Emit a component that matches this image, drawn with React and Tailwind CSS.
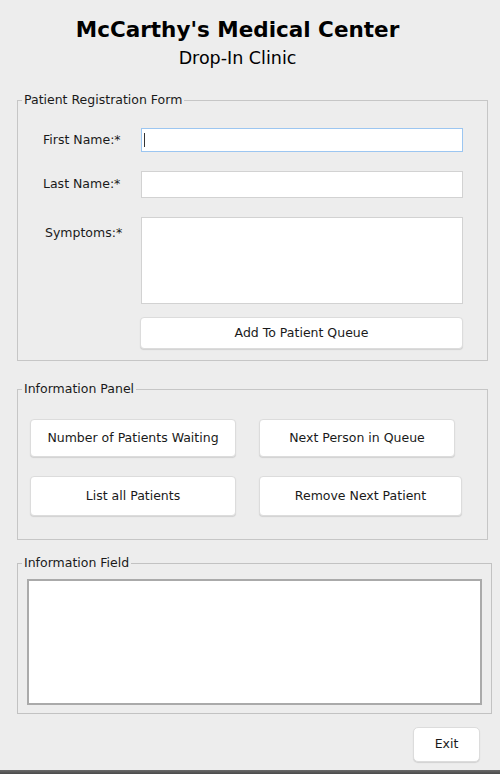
export default function App() {
  return (
    <div className="w-[500px] h-[774px] bg-[#ececec] flex flex-col font-['DejaVu_Sans',sans-serif] text-[#1a1a1a] overflow-hidden">
      <div className="flex flex-col flex-1 bg-[#ededed]">
        <div className="flex flex-col items-center pr-[25px] pt-[17px]">
          <div className="text-[21.5px] leading-[26px] font-bold text-black">McCarthy's Medical Center</div>
          <div className="text-[17.5px] leading-[22px] text-black mt-[4px]">Drop-In Clinic</div>
        </div>

        <fieldset className="mt-[23px] ml-[17px] w-[471px] border border-[#c6c6c6] px-[12px] pb-[11px]">
          <legend className="-ml-[8px] px-[2px] text-[12.5px] leading-[16px]">Patient Registration Form</legend>
          <div className="grid grid-cols-[111px_322px] gap-y-[19px] pt-[20px]">
            <div className="pl-[13px] flex items-center text-[12.5px]">First Name:*</div>
            <div className="h-[24px] bg-white border border-[#9cc6f1] flex items-center pl-[2px]">
              <div className="w-[1px] h-[14px] bg-[#333]" />
            </div>
            <div className="pl-[13px] flex items-center text-[12.5px]">Last Name:*</div>
            <div className="h-[27px] bg-white border border-[#d2d2d2]" />
            <div className="pl-[15px] pt-[7px] text-[12.5px]">Symptoms:*</div>
            <div className="h-[87px] bg-white border border-[#d2d2d2]" />
          </div>
          <div className="flex pl-[110px] mt-[13px]">
            <button className="w-[323px] h-[32px] bg-white rounded-[4px] border border-[#dcdcdc] shadow-[0_1px_1px_rgba(0,0,0,0.12)] text-[12.5px]">Add To Patient Queue</button>
          </div>
        </fieldset>

        <fieldset className="mt-[20px] ml-[17px] w-[471px] border border-[#c6c6c6] pl-[12px] pt-[22px] pb-[23px]">
          <legend className="-ml-[8px] px-[2px] text-[12.5px] leading-[16px]">Information Panel</legend>
          <div className="flex flex-col gap-[19px]">
            <div className="flex gap-[23px]">
              <button className="w-[206px] h-[38px] bg-white rounded-[4px] border border-[#dcdcdc] shadow-[0_1px_1px_rgba(0,0,0,0.12)] text-[12.5px]">Number of Patients Waiting</button>
              <button className="w-[196px] h-[38px] bg-white rounded-[4px] border border-[#dcdcdc] shadow-[0_1px_1px_rgba(0,0,0,0.12)] text-[12.5px]">Next Person in Queue</button>
            </div>
            <div className="flex gap-[23px]">
              <button className="w-[206px] h-[40px] bg-white rounded-[4px] border border-[#dcdcdc] shadow-[0_1px_1px_rgba(0,0,0,0.12)] text-[12.5px]">List all Patients</button>
              <button className="w-[203px] h-[40px] bg-white rounded-[4px] border border-[#dcdcdc] shadow-[0_1px_1px_rgba(0,0,0,0.12)] text-[12.5px]">Remove Next Patient</button>
            </div>
          </div>
        </fieldset>

        <fieldset className="mt-[15px] ml-[17px] w-[473px] border border-[#c2c2c2] px-[9px] pt-[8px] pb-[8px]">
          <legend className="-ml-[5px] px-[2px] text-[12.5px] leading-[16px]">Information Field</legend>
          <div className="h-[126px] w-[455px] bg-white border-2 border-[#aaaaaa]" />
        </fieldset>

        <div className="flex justify-end pr-[20px] mt-[13px]">
          <button className="w-[67px] h-[35px] bg-white rounded-[5px] border border-[#dcdcdc] shadow-[0_1px_1px_rgba(0,0,0,0.12)] text-[12.5px]">Exit</button>
        </div>
      </div>
      <div className="h-[4px] bg-gradient-to-b from-[#6a6a6a] to-[#4a4a4a]" />
    </div>
  );
}
